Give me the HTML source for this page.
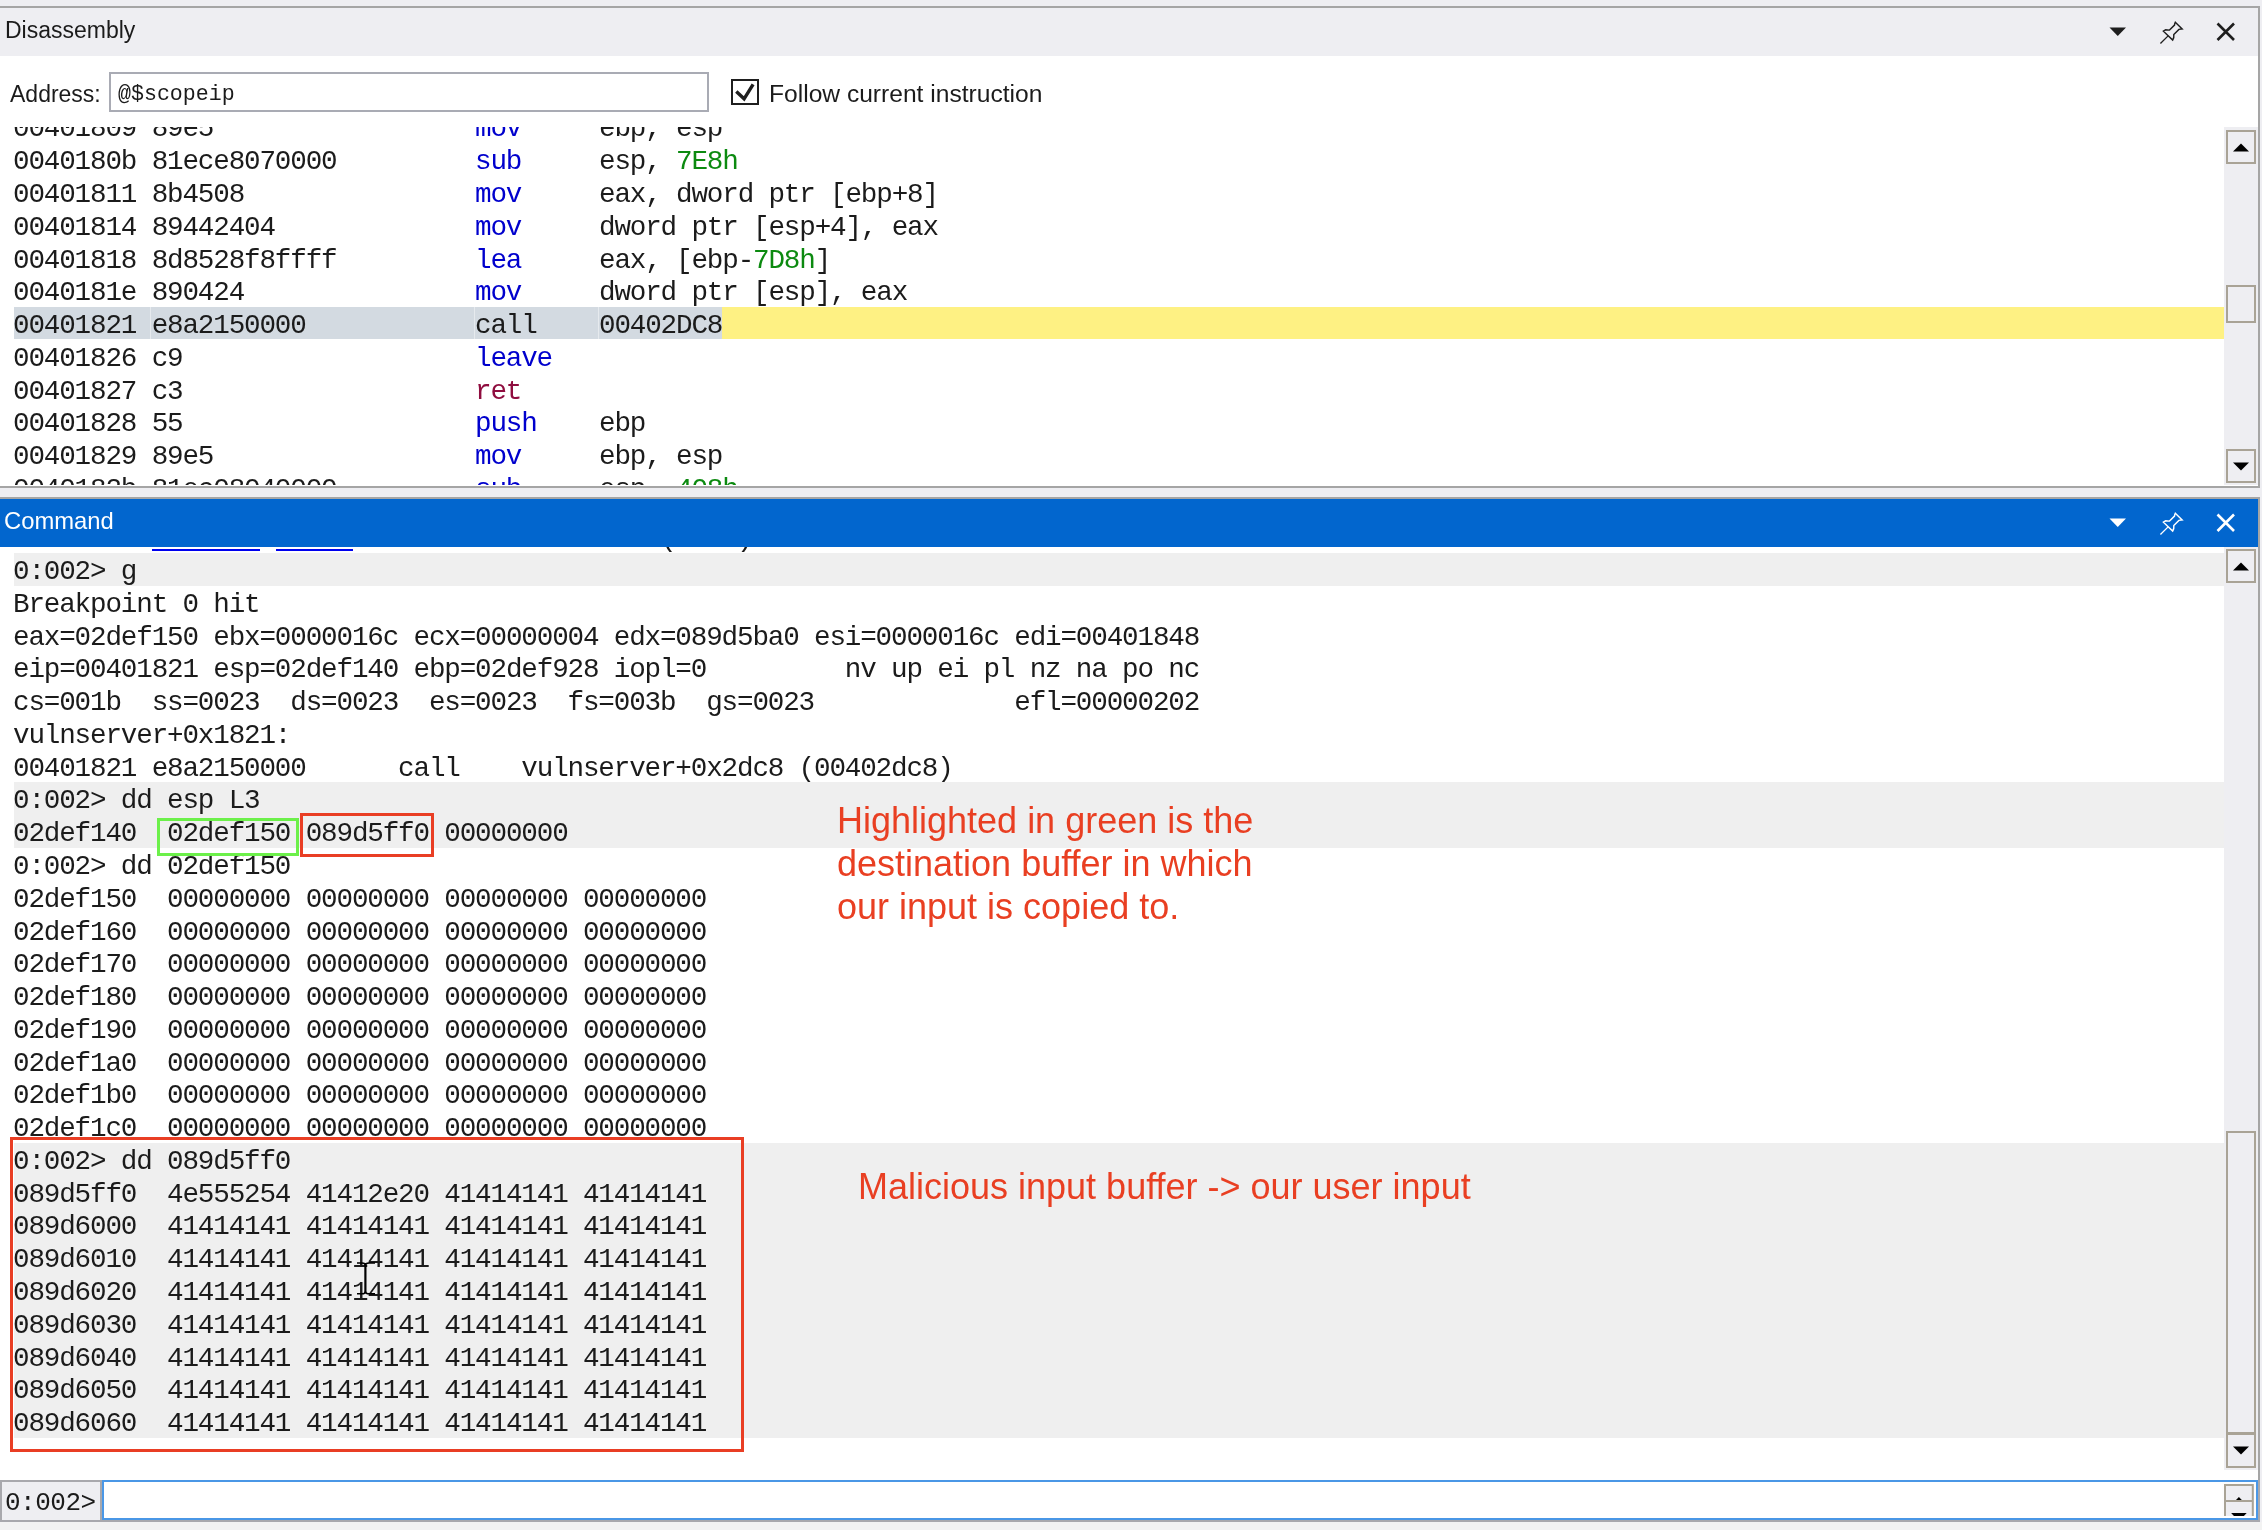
<!DOCTYPE html>
<html><head><meta charset="utf-8">
<style>
*{margin:0;padding:0;box-sizing:border-box}
html,body{width:2262px;height:1530px;overflow:hidden;background:#eeeef2}
body{position:relative;font-family:"Liberation Sans",sans-serif;color:#1b1b1b}
.a{position:absolute}
.mono{will-change:transform;font-family:"Liberation Mono",monospace;font-size:27.6px;letter-spacing:-1.155px;white-space:pre;line-height:32.77px;color:#1b1b1b}
.sans{will-change:transform;font-family:"Liberation Sans",sans-serif;white-space:pre}
.b{color:#0000cd}.m{color:#8f0d3f}.g{color:#0c8a10}
</style></head><body>

<div class="a" style="left:0;top:6px;width:2260px;height:482px;background:#fff;border-top:2px solid #a5a5a5;border-right:2px solid #a5a5a5;border-bottom:2px solid #a5a5a5"></div>
<div class="a" style="left:0;top:8px;width:2258px;height:48px;background:#eeeef2"></div>
<div class="a sans" style="left:4.5px;top:15.73px;font-size:23px;line-height:28px;color:#1b1b1b;">Disassembly</div>
<svg class="a" style="left:2100px;top:20px" width="150" height="40" viewBox="0 0 150 40"><path d="M9.5 7.5 L26 7.5 L17.75 16 Z" fill="#1e1e1e"/><g fill="none" stroke="#1e1e1e" stroke-width="1.45" stroke-linejoin="miter"><path d="M75.3 2.2 L82.2 8.9 L78.9 9.4 L73.8 14.5 Q74.2 18 72.7 20.1 L63.4 11.2 L65.65 9.8 L69.5 10.1 L74.5 5.1 Q74.6 3.6 75.3 2.2 Z" fill="#eeeef2"/><path d="M68.1 15.9 L60.4 23.5" stroke-width="1.3"/></g><path d="M117.5 3.5 L134 20 M134 3.5 L117.5 20" stroke="#1e1e1e" stroke-width="2.6" fill="none"/></svg>
<div class="a sans" style="left:10px;top:79.73px;font-size:23px;line-height:28px;color:#1b1b1b;">Address:</div>
<div class="a" style="left:109px;top:72px;width:600px;height:40px;border:2px solid #a9abb4;background:#fff"></div>
<div class="a mono" style="left:117.5px;top:80.95px;font-size:21.6px;letter-spacing:0;line-height:26px">@$scopeip</div>
<div class="a" style="left:731px;top:79px;width:28px;height:26px;border:2px solid #1e1e1e;background:#fff"></div>
<svg class="a" style="left:731px;top:79px" width="28" height="27" viewBox="0 0 28 27"><path d="M5.3 12.6 L13.1 19.8 L22.1 5.4" fill="none" stroke="#1e1e1e" stroke-width="3.4" stroke-linejoin="miter"/></svg>
<div class="a sans" style="left:769px;top:78.97px;font-size:24.6px;line-height:30px;color:#1b1b1b;">Follow current instruction</div>
<div class="a" style="left:0;top:127px;width:2224px;height:358px;overflow:hidden">
<div class="a mono" style="left:13.3px;top:-13.53px">00401809 89e5</div>
<div class="a mono" style="left:475.45px;top:-13.53px"><span class="b">mov</span></div>
<div class="a mono" style="left:598.69px;top:-13.53px">ebp, esp</div>
<div class="a mono" style="left:13.3px;top:19.24px">0040180b 81ece8070000</div>
<div class="a mono" style="left:475.45px;top:19.24px"><span class="b">sub</span></div>
<div class="a mono" style="left:598.69px;top:19.24px">esp, <span class="g">7E8h</span></div>
<div class="a mono" style="left:13.3px;top:52.01px">00401811 8b4508</div>
<div class="a mono" style="left:475.45px;top:52.01px"><span class="b">mov</span></div>
<div class="a mono" style="left:598.69px;top:52.01px">eax, dword ptr [ebp+8]</div>
<div class="a mono" style="left:13.3px;top:84.78px">00401814 89442404</div>
<div class="a mono" style="left:475.45px;top:84.78px"><span class="b">mov</span></div>
<div class="a mono" style="left:598.69px;top:84.78px">dword ptr [esp+4], eax</div>
<div class="a mono" style="left:13.3px;top:117.55px">00401818 8d8528f8ffff</div>
<div class="a mono" style="left:475.45px;top:117.55px"><span class="b">lea</span></div>
<div class="a mono" style="left:598.69px;top:117.55px">eax, [ebp-<span class="g">7D8h</span>]</div>
<div class="a mono" style="left:13.3px;top:150.32px">0040181e 890424</div>
<div class="a mono" style="left:475.45px;top:150.32px"><span class="b">mov</span></div>
<div class="a mono" style="left:598.69px;top:150.32px">dword ptr [esp], eax</div>
<div class="a" style="left:14px;top:180.02px;width:708px;height:32px;background:#d3dae1"></div>
<div class="a" style="left:150px;top:180.02px;width:1px;height:32px;background:#e6eaee"></div>
<div class="a" style="left:474px;top:180.02px;width:1px;height:32px;background:#e6eaee"></div>
<div class="a" style="left:598px;top:180.02px;width:1px;height:32px;background:#e6eaee"></div>
<div class="a" style="left:722px;top:180.02px;width:1502px;height:32px;background:#fef183"></div>
<div class="a mono" style="left:13.3px;top:183.09px">00401821 e8a2150000</div>
<div class="a mono" style="left:475.45px;top:183.09px"><span class="">call</span></div>
<div class="a mono" style="left:598.69px;top:183.09px">00402DC8</div>
<div class="a mono" style="left:13.3px;top:215.86px">00401826 c9</div>
<div class="a mono" style="left:475.45px;top:215.86px"><span class="b">leave</span></div>
<div class="a mono" style="left:13.3px;top:248.63px">00401827 c3</div>
<div class="a mono" style="left:475.45px;top:248.63px"><span class="m">ret</span></div>
<div class="a mono" style="left:13.3px;top:281.40px">00401828 55</div>
<div class="a mono" style="left:475.45px;top:281.40px"><span class="b">push</span></div>
<div class="a mono" style="left:598.69px;top:281.40px">ebp</div>
<div class="a mono" style="left:13.3px;top:314.17px">00401829 89e5</div>
<div class="a mono" style="left:475.45px;top:314.17px"><span class="b">mov</span></div>
<div class="a mono" style="left:598.69px;top:314.17px">ebp, esp</div>
<div class="a mono" style="left:13.3px;top:346.94px">0040182b 81ec08040000</div>
<div class="a mono" style="left:475.45px;top:346.94px"><span class="b">sub</span></div>
<div class="a mono" style="left:598.69px;top:346.94px">esp, <span class="g">408h</span></div>
</div>
<div class="a" style="left:2224px;top:127px;width:34px;height:358px;background:#eeeef2"></div>
<div class="a" style="left:2226px;top:130px;width:30px;height:34px;border:2px solid #a9a396;background:#eeeef2"></div>
<svg class="a" style="left:2233.0px;top:142.5px" width="16" height="9"><path d="M0 8.5 L16 8.5 L8 0.5 Z" fill="#000"/></svg>
<div class="a" style="left:2226px;top:285px;width:30px;height:38px;border:2px solid #a9a396;background:#eeeef2"></div>
<div class="a" style="left:2226px;top:449px;width:30px;height:34px;border:2px solid #a9a396;background:#eeeef2"></div>
<svg class="a" style="left:2233.0px;top:461.5px" width="16" height="9"><path d="M0 0.5 L16 0.5 L8 8.5 Z" fill="#000"/></svg>
<div class="a" style="left:0;top:497px;width:2260px;height:1026px;background:#fff;border-top:2px solid #a5a5a5;border-right:2px solid #a5a5a5;border-bottom:2px solid #a5a5a5"></div>
<div class="a" style="left:0;top:499px;width:2258px;height:47.5px;background:#0266ce"></div>
<div class="a sans" style="left:4px;top:506.25px;font-size:23.8px;line-height:29px;color:#fff;">Command</div>
<svg class="a" style="left:2100px;top:511px" width="150" height="40" viewBox="0 0 150 40"><path d="M9.5 7.5 L26 7.5 L17.75 16 Z" fill="#fff"/><g fill="none" stroke="#fff" stroke-width="1.45" stroke-linejoin="miter"><path d="M75.3 2.2 L82.2 8.9 L78.9 9.4 L73.8 14.5 Q74.2 18 72.7 20.1 L63.4 11.2 L65.65 9.8 L69.5 10.1 L74.5 5.1 Q74.6 3.6 75.3 2.2 Z" fill="#0266ce"/><path d="M68.1 15.9 L60.4 23.5" stroke-width="1.3"/></g><path d="M117.5 3.5 L134 20 M134 3.5 L117.5 20" stroke="#fff" stroke-width="2.6" fill="none"/></svg>
<div class="a" style="left:0;top:546.5px;width:2224px;height:923.5px;overflow:hidden">
<div class="a" style="left:152px;top:2.0px;width:108px;height:2px;background:#0000ee"></div>
<div class="a" style="left:275.5px;top:2.0px;width:77px;height:2px;background:#0000ee"></div>
<div class="a" style="left:14px;top:6.50px;width:2210px;height:32.77px;background:#efefef"></div>
<div class="a" style="left:14px;top:235.89px;width:2210px;height:65.54px;background:#efefef"></div>
<div class="a" style="left:14px;top:596.36px;width:2210px;height:294.93px;background:#efefef"></div>
<div class="a mono" style="left:13.3px;top:-23.20px">     0 e <span style="color:#0000ee">Disable</span> <span style="color:#0000ee">Clear</span>  00401821     0001 (0001)  0:**** vulnserver+0x1821</div>
<div class="a mono" style="left:13.3px;top:9.57px">0:002&gt; g</div>
<div class="a mono" style="left:13.3px;top:42.34px">Breakpoint 0 hit</div>
<div class="a mono" style="left:13.3px;top:75.11px">eax=02def150 ebx=0000016c ecx=00000004 edx=089d5ba0 esi=0000016c edi=00401848</div>
<div class="a mono" style="left:13.3px;top:107.88px">eip=00401821 esp=02def140 ebp=02def928 iopl=0         nv up ei pl nz na po nc</div>
<div class="a mono" style="left:13.3px;top:140.65px">cs=001b  ss=0023  ds=0023  es=0023  fs=003b  gs=0023             efl=00000202</div>
<div class="a mono" style="left:13.3px;top:173.42px">vulnserver+0x1821:</div>
<div class="a mono" style="left:13.3px;top:206.19px">00401821 e8a2150000      call    vulnserver+0x2dc8 (00402dc8)</div>
<div class="a mono" style="left:13.3px;top:238.96px">0:002&gt; dd esp L3</div>
<div class="a mono" style="left:13.3px;top:271.73px">02def140  02def150 089d5ff0 00000000</div>
<div class="a mono" style="left:13.3px;top:304.50px">0:002&gt; dd 02def150</div>
<div class="a mono" style="left:13.3px;top:337.27px">02def150  00000000 00000000 00000000 00000000</div>
<div class="a mono" style="left:13.3px;top:370.04px">02def160  00000000 00000000 00000000 00000000</div>
<div class="a mono" style="left:13.3px;top:402.81px">02def170  00000000 00000000 00000000 00000000</div>
<div class="a mono" style="left:13.3px;top:435.58px">02def180  00000000 00000000 00000000 00000000</div>
<div class="a mono" style="left:13.3px;top:468.35px">02def190  00000000 00000000 00000000 00000000</div>
<div class="a mono" style="left:13.3px;top:501.12px">02def1a0  00000000 00000000 00000000 00000000</div>
<div class="a mono" style="left:13.3px;top:533.89px">02def1b0  00000000 00000000 00000000 00000000</div>
<div class="a mono" style="left:13.3px;top:566.66px">02def1c0  00000000 00000000 00000000 00000000</div>
<div class="a mono" style="left:13.3px;top:599.43px">0:002&gt; dd 089d5ff0</div>
<div class="a mono" style="left:13.3px;top:632.20px">089d5ff0  4e555254 41412e20 41414141 41414141</div>
<div class="a mono" style="left:13.3px;top:664.97px">089d6000  41414141 41414141 41414141 41414141</div>
<div class="a mono" style="left:13.3px;top:697.74px">089d6010  41414141 41414141 41414141 41414141</div>
<div class="a mono" style="left:13.3px;top:730.51px">089d6020  41414141 41414141 41414141 41414141</div>
<div class="a mono" style="left:13.3px;top:763.28px">089d6030  41414141 41414141 41414141 41414141</div>
<div class="a mono" style="left:13.3px;top:796.05px">089d6040  41414141 41414141 41414141 41414141</div>
<div class="a mono" style="left:13.3px;top:828.82px">089d6050  41414141 41414141 41414141 41414141</div>
<div class="a mono" style="left:13.3px;top:861.59px">089d6060  41414141 41414141 41414141 41414141</div>
</div>
<div class="a" style="left:2224px;top:546.5px;width:34px;height:923.5px;background:#eeeef2"></div>
<div class="a" style="left:2226px;top:549px;width:30px;height:34px;border:2px solid #a9a396;background:#eeeef2"></div>
<svg class="a" style="left:2233.0px;top:561.5px" width="16" height="9"><path d="M0 8.5 L16 8.5 L8 0.5 Z" fill="#000"/></svg>
<div class="a" style="left:2226px;top:1131px;width:30px;height:303px;border:2px solid #a9a396;background:#eeeef2"></div>
<div class="a" style="left:2226px;top:1433px;width:30px;height:35px;border:2px solid #a9a396;background:#eeeef2"></div>
<svg class="a" style="left:2233.0px;top:1446.0px" width="16" height="9"><path d="M0 0.5 L16 0.5 L8 8.5 Z" fill="#000"/></svg>
<svg class="a" style="left:350px;top:1255px" width="30" height="45" viewBox="0 0 30 45"><g stroke="#000" fill="none"><path d="M15.4 9.5 L15.4 38" stroke-width="2.2"/><path d="M7 8 L12 8 Q15.4 8 15.4 10.5 Q15.4 8 19 8 L25 8" stroke-width="1.6"/><path d="M7 38.8 L12 38.8 Q15.4 38.8 15.4 36.5 Q15.4 38.8 19 38.8 L25 38.8" stroke-width="1.6"/></g></svg>
<div class="a" style="left:157px;top:818px;width:141.5px;height:37.5px;border:3px solid #6cf04a"></div>
<div class="a" style="left:300px;top:813px;width:134px;height:44px;border:3px solid #e93e24"></div>
<div class="a" style="left:10px;top:1137px;width:734px;height:315px;border:3px solid #e93e24"></div>
<div class="a sans" style="left:836.5px;top:799.12px;font-size:36px;line-height:43px;color:#e93f22;">Highlighted in green is the</div>
<div class="a sans" style="left:836.5px;top:841.82px;font-size:36px;line-height:43px;color:#e93f22;">destination buffer in which</div>
<div class="a sans" style="left:836.5px;top:884.52px;font-size:36px;line-height:43px;color:#e93f22;">our input is copied to.</div>
<div class="a sans" style="left:858px;top:1165.42px;font-size:36px;line-height:43px;color:#e93f22;">Malicious input buffer -&gt; our user input</div>
<div class="a" style="left:0;top:1480px;width:2260px;height:42px;background:#a8a8ad"></div>
<div class="a" style="left:2px;top:1482px;width:98px;height:38px;background:#eeeef2"></div>
<div class="a mono" style="left:5.3px;top:1486.88px;font-size:26px;letter-spacing:-0.5px;line-height:32px">0:002&gt;</div>
<div class="a" style="left:102px;top:1480px;width:2156px;height:40px;border:2px solid #4a97e6;background:#fff"></div>
<svg class="a" style="left:2222px;top:1482px" width="34" height="34" viewBox="0 0 34 34"><rect x="0" y="0" width="34" height="34" fill="#fdfdfd"/><rect x="2" y="2" width="29.8" height="32" fill="#eeeef2"/><path d="M3 34 L3 3 L30.8 3 L30.8 34 M3 19 L30.8 19" fill="none" stroke="#a9a396" stroke-width="2"/><path d="M14 18 L19.8 18 L16.9 15 Z" fill="#000"/><path d="M9.1 31.1 L24.7 31.1 L16.9 39 Z" fill="#000"/></svg>
<div class="a" style="left:0;top:1522px;width:2262px;height:8px;background:#f2f2f2"></div>
</body></html>
